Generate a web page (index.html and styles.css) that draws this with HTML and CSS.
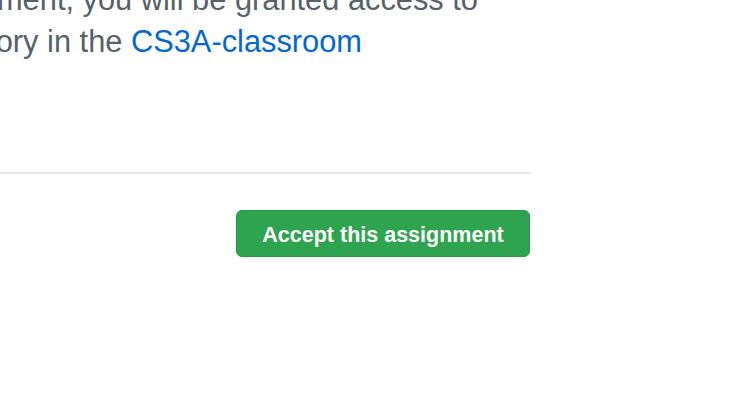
FILE: index.html
```html
<!DOCTYPE html>
<html lang="en">
<head>
<meta charset="utf-8">
<title>Accept assignment</title>
<link rel="stylesheet" href="styles.css">
</head>
<body>
<main class="page">
  <div class="lead">
    <div class="line line-1"><span class="line-text">Once you accept this assignment, you will be granted access to</span></div>
    <div class="line line-2"><span class="line-text">the assignment repository in the <a class="org-link" href="#">CS3A-classroom</a></span></div>
  </div>
  <hr class="divider">
  <div class="actions">
    <button class="btn-primary" type="button">Accept this assignment</button>
  </div>
</main>
</body>
</html>
```

FILE: styles.css
```css
html, body {
  margin: 0;
  padding: 0;
  background: #ffffff;
  overflow: hidden;
}

body {
  width: 748px;
  height: 418px;
  font-family: "Liberation Sans", Arial, sans-serif;
}

.page {
  width: 530px;
}

.lead {
  margin-top: -21px;
  font-size: 30.8px;
  line-height: 42px;
  color: #586069;
}

.line {
  display: flex;
  justify-content: flex-end;
  white-space: nowrap;
}

.line-1 {
  width: 478px;
}

.line-2 {
  width: 362px;
}

.org-link {
  color: #0366d6;
  text-decoration: none;
}

.divider {
  margin: 109px 0 36px 0;
  border: 0;
  border-top: 2px solid #e4e6e9;
  height: 0;
}

.actions {
  display: flex;
  justify-content: flex-end;
}

.btn-primary {
  box-sizing: border-box;
  width: 294px;
  height: 47px;
  white-space: nowrap;
  font-family: "Liberation Sans", Arial, sans-serif;
  font-weight: bold;
  font-size: 21.5px;
  line-height: 27px;
  padding: 11px 0 7px 0;
  text-align: center;
  color: #ffffff;
  background: #2ea44f;
  border: 1px solid #2a9347;
  border-radius: 6px;
  cursor: pointer;
}
```
